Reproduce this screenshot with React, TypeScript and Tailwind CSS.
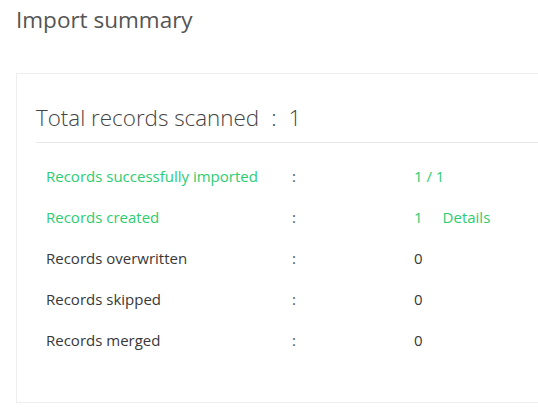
const rows = [
  { label: 'Records successfully imported', value: '1 / 1', green: true },
  { label: 'Records created', value: '1', green: true, details: true },
  { label: 'Records overwritten', value: '0' },
  { label: 'Records skipped', value: '0' },
  { label: 'Records merged', value: '0' },
]

export default function App() {
  return (
    <div className="h-[416px] w-[538px] overflow-hidden bg-white font-['Open_Sans',sans-serif]">
      {/* Page title */}
      <h1 className="pl-4 pt-[5px] text-[22.5px] leading-[30px] text-[#555]">Import summary</h1>

      {/* Summary card */}
      <div className="ml-4 mt-[38px] h-[330px] w-[560px] border border-[#eeeeee] pl-[19px] pt-[28px]">
        <div className="flex items-center border-b border-[#e8e8e8] pb-[9px] text-[22.4px] font-light leading-[31px] text-[#444]">
          <span>Total records scanned</span>
          <span className="ml-[12px]">:</span>
          <span className="ml-[12px]">1</span>
        </div>

        <div className="pl-[10px] pt-[13px]">
          {rows.map((row) => (
            <div
              key={row.label}
              className={`flex h-[41px] items-center text-[15px] ${
                row.green ? 'text-[#2ecc71]' : 'text-[#383838]'
              }`}
            >
              <span className="w-[246px] shrink-0">{row.label}</span>
              <span className="w-[122px] shrink-0 text-[#555]">:</span>
              <span>{row.value}</span>
              {row.details && <span className="ml-[20px]">Details</span>}
            </div>
          ))}
        </div>
      </div>
    </div>
  )
}
